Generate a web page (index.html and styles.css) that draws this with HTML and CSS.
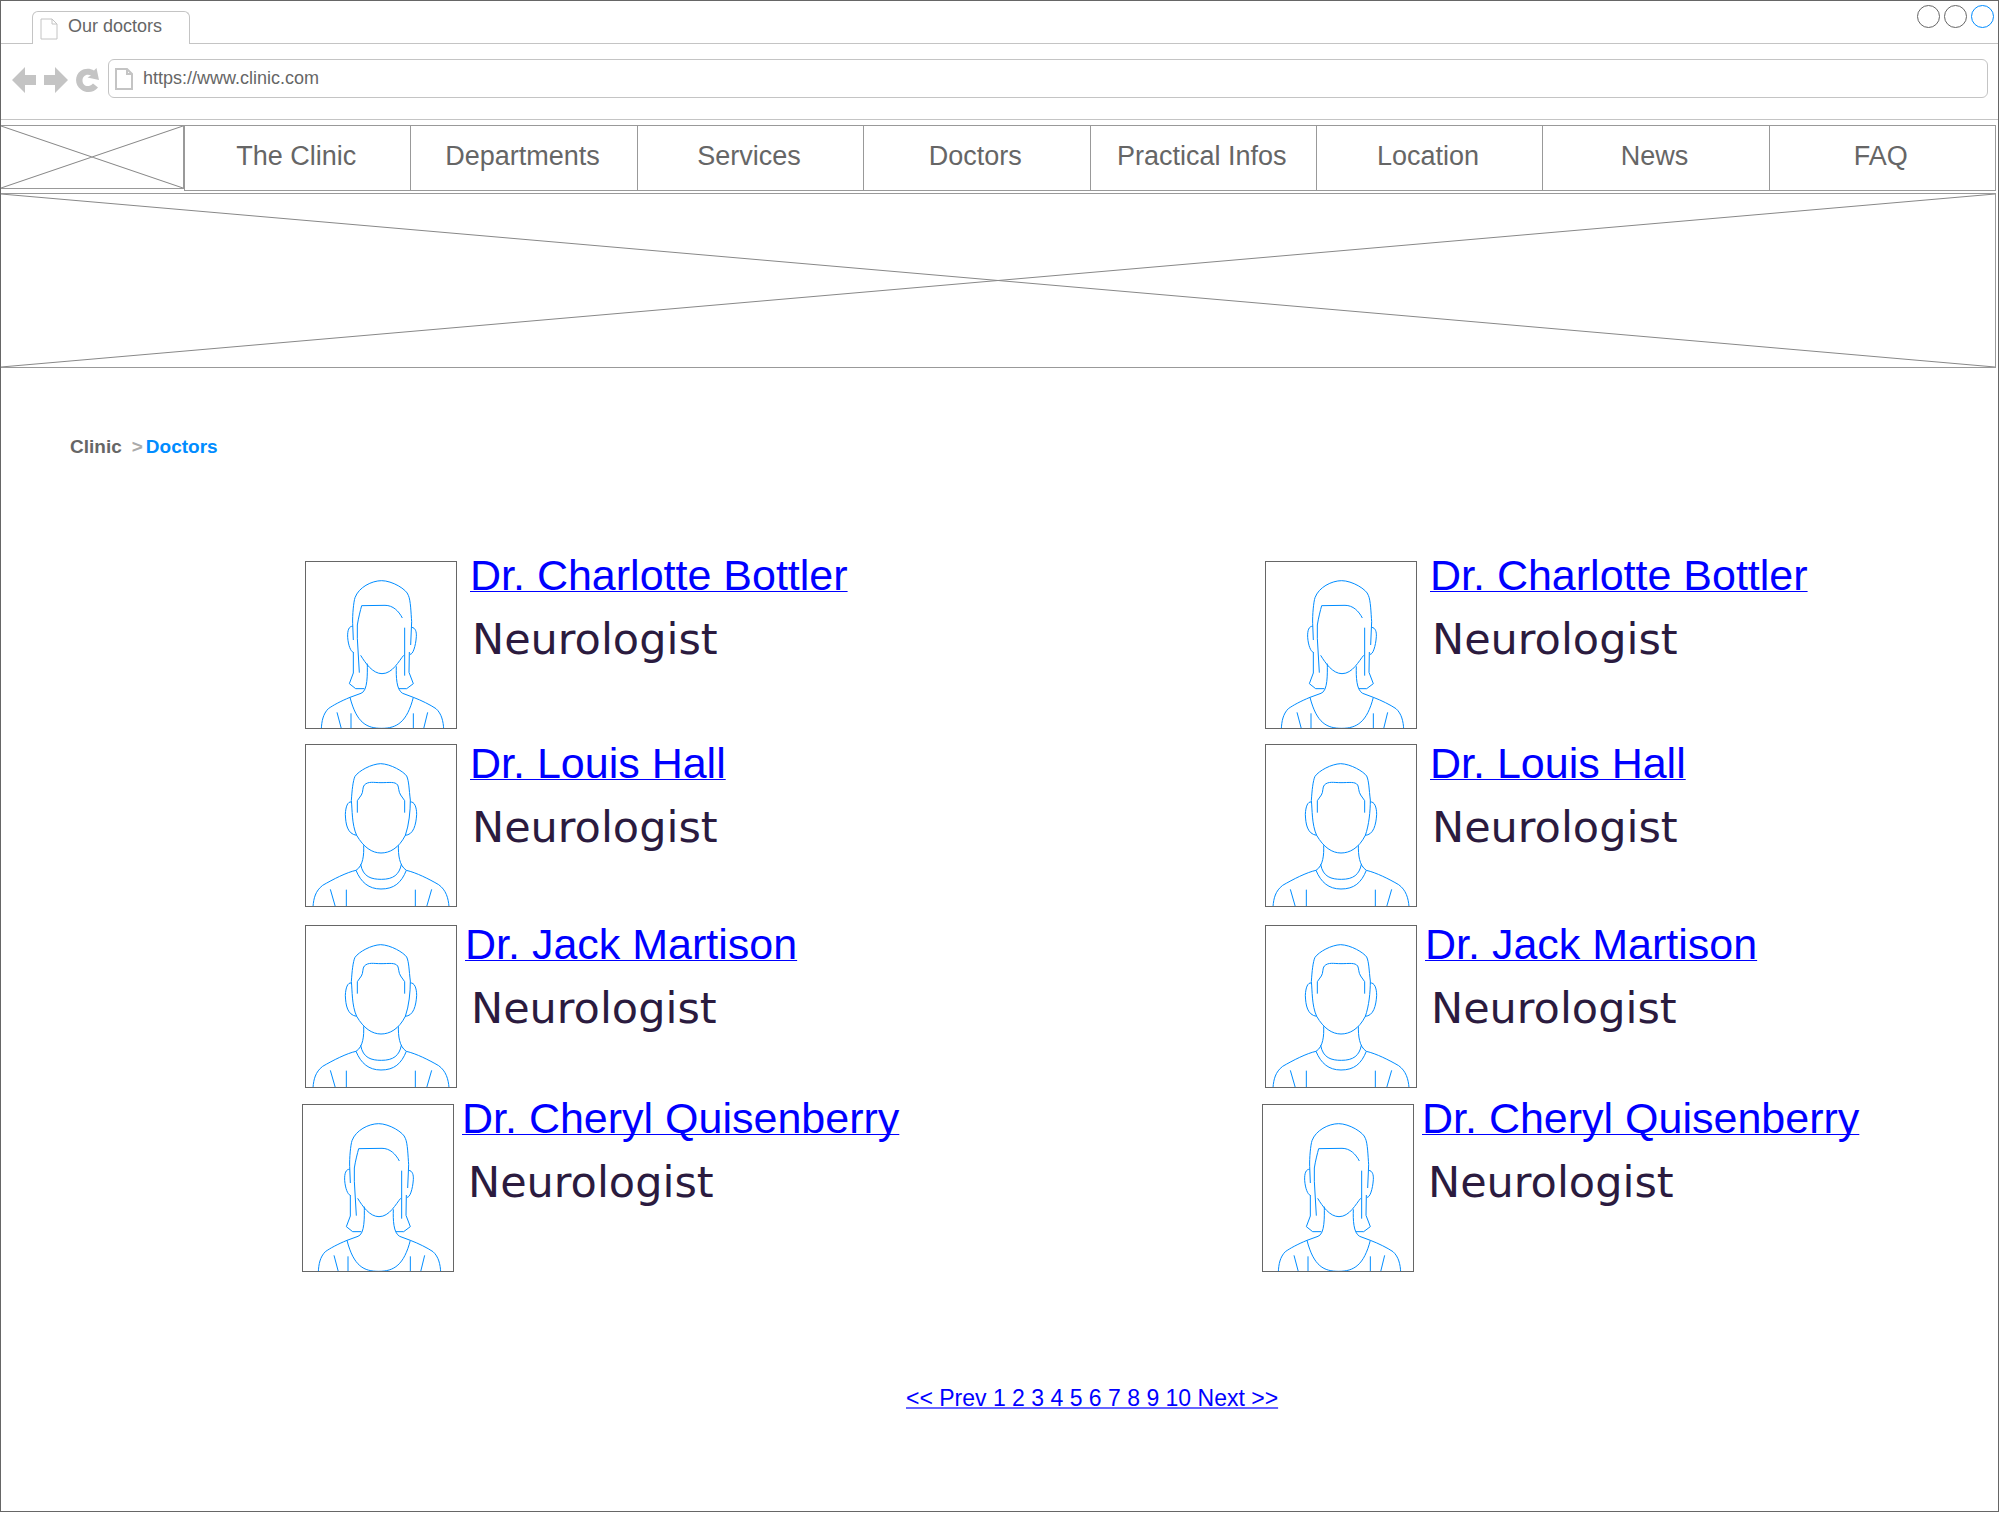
FILE: index.html
```html
<!DOCTYPE html>
<html lang="en">
<head>
<meta charset="utf-8">
<title>Our doctors</title>
<link rel="stylesheet" href="styles.css">
</head>
<body>
<svg class="sprite" aria-hidden="true">
  <symbol id="page" viewBox="0 0 18 22"><path d="M1 1H12L17 6V21H1ZM12 1V6H17"/></symbol>
  <symbol id="woman" viewBox="48 51 450 498">
    <path d="M190 285L188 235C187 210 191 170 195 158C206 127 245 107 275 107C306 107 350 133 355 151C362 165 363 205 365 230L362 300"/>
    <path d="M208 383L202 280V240C206 215 211 197 215 182L285 181C309 181 326 198 337 219M344 248V392"/>
    <path d="M188 244C177 243 172 256 173 277C175 302 182 319 190 322M365 247C376 248 380 260 379 275C377 303 369 329 360 328"/>
    <path d="M190 321V384L178 416L197 431H223M358 321L357 382L370 416L350 431H327"/>
    <path d="M212 331C226 354 248 386 276 386C308 386 327 347 341 331"/>
    <path d="M232 356C232 386 234 438 213 445L180 457C151 469 129 481 115 491C99 507 95 529 94 552M319 364C318 395 319 435 338 445L370 457C396 467 420 479 438 491C455 506 460 530 461 552"/>
    <path d="M180 457C200 535 231 550 275 550C321 550 351 531 370 457M141 502L154 551M183 505V551M413 502L401 551M370 505V551"/>
  </symbol>
  <symbol id="man" viewBox="48 31 450 483">
    <path d="M200 302C185 270 187 223 184 198C186 167 189 138 195 125C207 108 244 88 272 87C303 88 341 111 350 124C357 139 357 164 361 196C361 230 357 271 346 302C326 341 299 355 273 355C246 355 221 338 200 302Z"/>
    <path d="M202 234V198L214 181C220 173 217 157 223 151C235 139 251 144 273 144C297 144 315 140 323 151C327 158 325 171 332 181L344 198V234"/>
    <path d="M184 202C173 200 167 216 166 239C167 269 172 298 200 302M361 202C373 200 380 217 380 239C378 270 371 301 345 302"/>
    <path d="M221 332C222 360 220 393 198 407C170 413 129 434 98 452C76 469 71 491 69 516M325 332C325 360 327 392 349 407C379 414 417 433 446 450C468 466 475 490 477 516"/>
    <path d="M212 389C219 427 244 434 274 434C310 434 328 420 334 389M198 407C213 443 236 463 273 463C313 463 334 444 349 407M121 464L136 516M169 465V516M425 464L410 516M376 465V516"/>
  </symbol>
</svg>
<div class="window">
  <header class="titlebar">
    <div class="tab"><svg class="page-icon thin"><use href="#page"/></svg><span>Our doctors</span></div>
    <div class="controls">
      <button aria-label="Minimize"></button><button aria-label="Maximize"></button><button class="close" aria-label="Close"></button>
    </div>
  </header>
  <form class="toolbar">
    <button type="button" aria-label="Back"><svg viewBox="0 0 24 26"><path d="M0 13L13 0V8H24V18H13V26Z"/></svg></button>
    <button type="button" aria-label="Forward"><svg viewBox="0 0 24 26"><path d="M24 13L11 0V8H0V18H11V26Z"/></svg></button>
    <button type="button" aria-label="Reload"><svg viewBox="0 0 24 26"><path d="M20.500 1L23 13L11.500 10.500L15 8.500C10 6.500 6.500 9.500 6.500 13.500C6.500 18.500 12 21.500 17 16.500L22 20.500C17.500 26 10.500 26.500 5 22.500C-1.500 18 -1.500 8.500 4.500 4C8.500 1 14 1 18 3.500Z"/></svg></button>
    <label class="address"><svg class="page-icon"><use href="#page"/></svg><input type="text" aria-label="Address" value="https://www.clinic.com"></label>
  </form>
  <div class="menu">
    <svg class="logo cross" viewBox="0 0 100 100" preserveAspectRatio="none" role="img" aria-label="Logo"><path d="M0 0L100 100M0 100L100 0"/></svg>
    <nav>
      <a href="#">The Clinic</a><a href="#">Departments</a><a href="#">Services</a><a href="#">Doctors</a><a href="#">Practical Infos</a><a href="#">Location</a><a href="#">News</a><a href="#">FAQ</a>
    </nav>
  </div>
  <svg class="banner cross" viewBox="0 0 100 100" preserveAspectRatio="none" role="img" aria-label="Banner"><path d="M0 0L100 100M0 100L100 0"/></svg>
  <main>
    <div class="breadcrumb"><a href="#">Clinic</a><span>&gt;</span><a class="current" href="#">Doctors</a></div>
    <div class="doctors">
      <ul>
        <li class="doctor"><svg class="photo tall"><use href="#woman"/></svg><div><a href="#">Dr. Charlotte Bottler</a><p>Neurologist</p></div></li>
        <li class="doctor low"><svg class="photo"><use href="#man"/></svg><div><a href="#">Dr. Louis Hall</a><p>Neurologist</p></div></li>
        <li class="doctor low near"><svg class="photo"><use href="#man"/></svg><div><a href="#">Dr. Jack Martison</a><p>Neurologist</p></div></li>
        <li class="doctor near last"><svg class="photo tall"><use href="#woman"/></svg><div><a href="#">Dr. Cheryl Quisenberry</a><p>Neurologist</p></div></li>
      </ul>
      <ul>
        <li class="doctor"><svg class="photo tall"><use href="#woman"/></svg><div><a href="#">Dr. Charlotte Bottler</a><p>Neurologist</p></div></li>
        <li class="doctor low"><svg class="photo"><use href="#man"/></svg><div><a href="#">Dr. Louis Hall</a><p>Neurologist</p></div></li>
        <li class="doctor low near"><svg class="photo"><use href="#man"/></svg><div><a href="#">Dr. Jack Martison</a><p>Neurologist</p></div></li>
        <li class="doctor near last"><svg class="photo tall"><use href="#woman"/></svg><div><a href="#">Dr. Cheryl Quisenberry</a><p>Neurologist</p></div></li>
      </ul>
    </div>
    <div class="pagination"><a href="#">&lt;&lt; Prev 1 2 3 4 5 6 7 8 9 10 Next &gt;&gt;</a></div>
  </main>
</div>
</body>
</html>
```
FILE: styles.css
```css
* { box-sizing: border-box; }
body { margin: 0; background: #fff; color: #666; font-family: "Liberation Sans", Arial, sans-serif; }
a { text-decoration: none; color: inherit; }
button { padding: 0; border: 0; background: none; }
svg { display: block; fill: none; }
.sprite { position: absolute; width: 0; height: 0; }
.window { border: 1px solid #666; margin: 0 1px 2px 0; padding-bottom: 100px; }

.titlebar { display: flex; justify-content: space-between; height: 43px; padding: 10px 4px 0 31px; border-bottom: 1px solid #c4c4c4; }
.tab { display: flex; gap: 10px; width: 158px; height: 33px; padding: 4px 7px 0; border: 1px solid #c4c4c4; border-bottom: 0; border-radius: 6px 6px 0 0; background: #fff; font-size: 18px; line-height: 20px; }
.page-icon { width: 18px; height: 22px; stroke: #c4c4c4; stroke-width: 2; }
.page-icon.thin { margin-top: 2px; stroke-width: 1; }
.controls { display: flex; gap: 4px; margin-top: -6px; }
.controls button { width: 23px; height: 23px; border: 1px solid #666; border-radius: 50%; }
.controls .close { border-color: #008cff; }

.toolbar { display: flex; align-items: center; gap: 8px; height: 76px; padding: 0 10px 6px 11px; border-bottom: 1px solid #c4c4c4; }
.toolbar button { width: 24px; height: 26px; margin-top: 3px; }
.toolbar button svg { width: 24px; height: 26px; fill: #c4c4c4; }
.address { display: flex; flex: 1; align-items: center; gap: 10px; height: 39px; padding: 0 6px; border: 1px solid #c4c4c4; border-radius: 6px; }
.address input { flex: 1; height: 24px; margin-bottom: 2px; padding: 0; border: 0; outline: 0; background: none; color: inherit; font: 18px/24px "Liberation Sans", Arial, sans-serif; }

.cross { border: 1px solid #999; }
.cross path { stroke: #888; stroke-width: 1; vector-effect: non-scaling-stroke; }
.menu { display: flex; align-items: flex-start; margin: 5px 2px 2px 0; }
.logo { width: 183px; height: 64px; border-left: 0; }
nav { display: flex; flex: 1; height: 66px; border: 1px solid #999; }
nav a { flex: 1 1 0; padding: 15px 3px 0 0; border-right: 1px solid #999; font-size: 27px; line-height: 30px; text-align: center; }
nav a:last-child { border-right: 0; }
.banner { width: calc(100% - 2px); height: 175px; border-left: 0; }

.breadcrumb { display: flex; margin: 67px 0 0 69px; font-size: 19px; line-height: 24px; font-weight: bold; }
.breadcrumb span { margin-left: 10px; color: #aaa; }
.breadcrumb .current { margin-left: 3px; color: #008cff; }

.doctors { display: grid; grid-template-columns: 1fr 1fr; margin-top: 102px; padding-right: 77px; }
ul { display: flex; flex-direction: column; gap: 16px; margin: 0; padding: 0 0 0 304px; list-style: none; }
.doctor { display: flex; align-items: flex-start; gap: 13px; }
.photo { width: 152px; height: 163px; border: 1px solid #666; stroke: #008cff; stroke-width: 3; }
.photo.tall { height: 168px; }
.doctor div { margin-top: -11px; white-space: nowrap; }
.doctor a { display: block; color: #00f; font-size: 43px; line-height: 50px; text-decoration: underline 1px; text-underline-offset: 1px; text-decoration-skip-ink: none; }
.doctor p { margin: 14px 0 0; padding-left: 2px; color: #2b1b3f; font-family: "DejaVu Sans", sans-serif; font-size: 43px; line-height: 50px; }
.doctor.low { margin-top: -1px; }
.doctor.low div { margin-top: -6px; }
.doctor.near { gap: 8px; }
.doctor.near p { padding-left: 6px; }
.doctor.low.near { margin-top: 2px; }
.doctor.last { margin-left: -3px; }

.pagination { margin-top: 113px; padding-left: 905px; font-size: 23px; line-height: 26px; color: #00f; }
.pagination a { text-decoration: underline 2px #6666ff; text-underline-offset: 1px; text-decoration-skip-ink: none; }
```
